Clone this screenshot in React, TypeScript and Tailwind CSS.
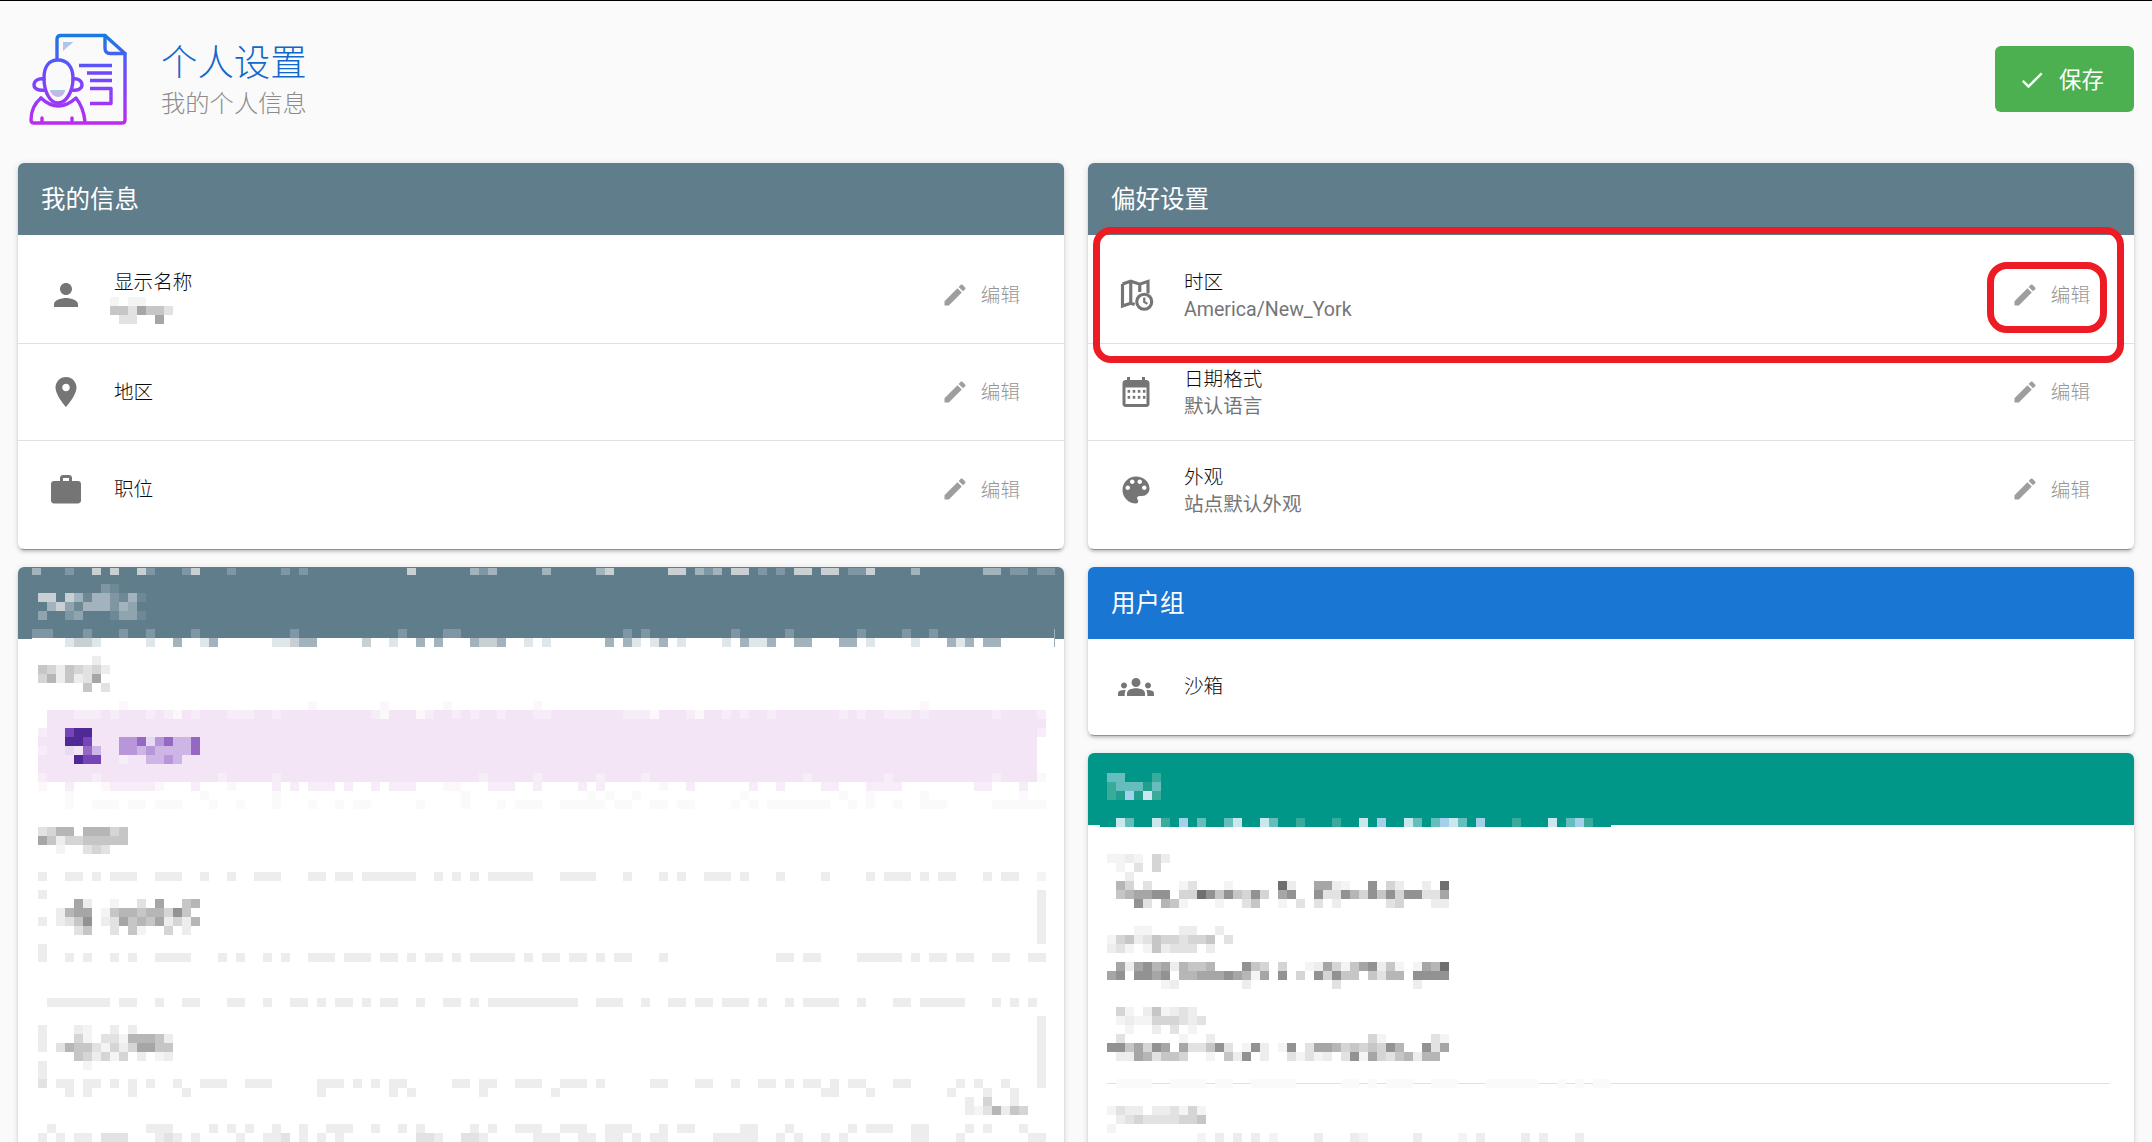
import React from 'react';

const COLORS: Record<string, string> = {
  '0': '#fafafa', '1': '#f4f4f4', '2': '#ededed', '3': '#e2e2e2', '4': '#d5d5d5',
  '5': '#c6c6c6', '6': '#b6b6b6', '7': '#a6a6a6', '8': '#929292', '9': '#6f6f6f',
  a: '#7f97a4', b: '#a3b3bd', c: '#c8d0d4', d: '#dfe7ea', g: '#6e8896', h: '#90a4af',
  p: '#f3e5f5', q: '#f7edf8', r: '#fbf7fb',
  v: '#4f2a96', w: '#7446b8', x: '#b796da', y: '#cdb6e6', z: '#9568c4', n: '#e8daf2',
  t: '#38ab9b', u: '#66bdbd', k: '#c8e8ee', l: '#a4d0ea', m: '#1fa08e',
};

type Row = [number, string, number?];

const LEFT_ROWS: Row[] = [
  [568, '0.33:b 4:a 7:c 9:c 12:ca 17:ac 22:a 28:a 30:a 42:c 49:bab 57:b 63:bc 71:cc 74:bab 78:cc 81:a 83:a 85:cc 88:cc 91:aac 98:b 106:bb 109:aa 112:aa', 7],
  [584, '8:ag'],
  [593, '1:cc 4:cbgbbagbg'],
  [602, '2:bchgbbbabh'],
  [611, '1:h 4:ah 9:ghhg'],
  [629, '0.33:aa 1.67:a 6:a 10:a 13:a 18:a 29:a 41:a 46:aa 66:a 68:a 78:a 84:a 92:a 97:a 100:a'],
  [638, '4:dccd 13:d 16:b 19:db 27:ddcbb 37:c 40:d 43:b 45:b 49:bccb 55:d 57:d 64:b 66:bd 69:db 72:d 77:d 79:bddb 85:bb 90:bb 93:d 98:d 102:bdb 106:bb'],
  [656, '7:2'],
  [665, '1:54254342'],
  [674, '1:4625237'],
  [683, '6:5 8:3'],
  [701, '10:r 31:r 39:r 46:r 56:r 99:r'],
  [710, '5:qqq 9:q 13:q 15:qr 18:q 22:qqq 27:q 38:qr 43:rq 47:q 49:q 52:q 56:qq 66:qqqr 73:qr 77:q 79:q 82:q 90:q 92:q 95:qqq 99:q 107:q 112:q'],
  [719, '112:p'],
  [728, '1:q 4:wvv 112:q'],
  [737, '1:p 4:vvw 10:xxznxzyyz'],
  [746, '1:q 4:n 6:zy 10:xxyxyyyyz'],
  [755, '1:p 5:vww 10:q 13:yyxy'],
  [764, '1:p'],
  [773, '1:q 7:q 21:q 27:q 50:q 56:q 63:q 68:q 86:q 95:q 107:q 112:r'],
  [782, '1:r 4:q 8:r 9:qqq 12:qq 14:r 18:q 22:r 27:q 29:q 31:qqq 35:q 38:q 40:qqq 46:rr 51:qqq 56:q 61:q 63:q 70:r 73:q 80:q 83:q 88:qq 93:qqqq 105:qq 110:q'],
  [791, '4:0 19:0 27:0 48:0 62:0 64:0 67:0 79:0 90:0 93:0 99:0 110:0'],
  [800, '4:0 7:000 11:00 14:000 20:0 23:0 27:0 31:0 34:0 36:00 43:0 48:0 52:0 54:000 59:00000 65:00 69:00 72:00 78:0 80:0 82:0000000 91:0 93:0 96:0 99:000 107:000000'],
  [827, '1:3466 6:66645'],
  [836, '1:7524455555'],
  [845, '3:1 6:343'],
  [872, '1:2 4:22 7:2 9:222 14:222 19:2 22:2 25:222 31:22 34:22 37:222222 45:2 47:2 49:2 51:22222 59:2222 66:2 70:2 72:2 75:222 79:2 83:2 88:2 93:2 95:222 99:2 101:22 106:2 108:22 112:1'],
  [890, '1:2 112:2'],
  [899, '5:72 9:1 12:3 14:7 17:56 112:2'],
  [908, '3:2677 8:1566566485 112:2'],
  [917, '1:2 3:2358 8:23756572426 112:2'],
  [926, '5:35 9:3 11:51 15:4 17:2 112:2'],
  [935, '112:2'],
  [944, '1:2'],
  [953, '1:2 4:2 6:2 9:2 11:2 14:2222 21:2 23:2 26:2 28:2 31:222 35:222 39:22 42:2 44:22 47:2 49:22222 55:2 57:22 60:22 63:2 65:22 70:2 83:22 86:22 92:22222 98:2 100:22 103:22 107:22 111:22'],
  [998, '2:2222222 10:22 14:2 17:22 22:22 26:2 29:22 32:2 34:22 37:2 39:22 43:2 46:22 49:2 51:2222222222 63:222 68:2 71:22 74:22 77:222 81:2 84:2 86:2222 92:2 96:22 99:22222 107:2 109:2 111:2'],
  [1016, '112:2'],
  [1025, '1:2 5:21 9:2 11:2 112:2'],
  [1034, '1:2 5:41 8:33 10:1 11:66652 112:2'],
  [1043, '1:2 3:36553 8:14247755 112:2'],
  [1052, '5:542414 12:2 14:12 112:2'],
  [1061, '1:2 6:1 112:2'],
  [1070, '1:2 112:2'],
  [1079, '1:3 3:22 6:22 9:2 11:2 13:2 16:2 19:222 24:222 32:222 36:2 38:2 40:22 47:22 50:22 54:22 56:2 59:222 63:2 69:22 74:22 78:2 81:22 84:2 86:22 89:2 91:22 96:22 103:2 105:2 108:2 112:2'],
  [1088, '4:2 6:2 11:2 17:2 32:2 40:2 42:2 50:2 58:2 88:22 93:2 102:2 106:2 109:2'],
  [1097, '104:2 106:4 109:2'],
  [1106, '104:2136254'],
  [1124, '2:2 13:222 20:2 22:2 24:2 27:2 30:2 33:222 38:2 41:2 43:2 49:2 51:2 54:222 59:222 64:222 70:2 72:22 79:22 84:2 91:2 93:222 98:22 104:2 106:2 110:2'],
  [1133, '1:2 3:2 5:22 8:333 14:232 18:2 23:2 26:223 30:2 32:2 34:2 43:33 45:2 48:33 50:2 56:222 61:22 64:22 67:2 69:22 76:22222 83:2 85:2 88:2 90:2 98:22 103:2 111:22'],
];

const TEAL_ROWS: Row[] = [
  [773, '1:uu 6:t'],
  [782, '1:tuuumu'],
  [791, '1:tmlmkt'],
  [818, '2:ku 6:kt 9:l 11:u 14:uk 18:ku 22:t 26:t 29:k 31:l 34:ku 37:ulku 42:l 46:t 50:k 52:ult'],
  [854, '1:1121 6:42'],
  [863, '2:1 4:3 6:4'],
  [872, '3:2'],
  [881, '2:64 5:3 9:13 14:1 20:92 24:7721 30:8 32:42 36:2 38:9'],
  [890, '2:5677 6:88 9:44985 14:85484 20:78 24:833864 30:85848 35:8 36:337'],
  [899, '4:83 7:65 9:1 13:1 16:35 20:1 22:3 24:3 26:2 32:34 37:22'],
  [926, '4:11 9:22 13:2'],
  [935, '1:14523 6:54434 11:45 14:3'],
  [944, '1:231 5:1525 8:333 12:2'],
  [962, '2:7278 6:672 9:6556 16:854 20:4 23:127 26:41 28:578 31:251 35:176 38:9'],
  [971, '1:78 4:887 7:8 9:667778 15:761 18:7 20:8 22:4 24:84 26:8 27:55 30:53 32:66 35:8888'],
  [980, '7:12 16:2 26:3 35:2'],
  [1007, '2:41 5:25 7:1232'],
  [1016, '2:1211 6:444 9:323'],
  [1025, '3:1 6:2 8:3 10:1'],
  [1034, '2:3 9:1 12:2 30:41 37:31'],
  [1043, '1:885748 7:7 9:7335 13:83 16:182 20:18 23:37764 28:54548 33:6 36:837'],
  [1052, '2:227 5:635 8:54 12:1 14:52 16:8 18:2 21:31 23:312 27:381 30:74356 35:2 36:66'],
  [1079, '2:0000 8:0000 13:00 17:00000 27:00 30:0 32:000 37:000 43:000000 51:0 53:0 55:00'],
  [1106, '1:132 4:2 6:2 7:231 10:41'],
  [1115, '2:2343 6:333 9:445'],
  [1124, '1:1'],
  [1133, '11:1 13:2 15:2 17:2 19:1 24:2 28:21 35:2 40:1 42:2 47:2 49:2 53:2'],
];

// the blurred parts of the shot, one rect per mosaic cell, in page coordinates
const Mosaic = ({ rows, x, y, originX, children }: { rows: Row[]; x: number; y: number; originX: number; children?: React.ReactNode }) => (
  <svg className="absolute left-0 top-0" width={1046} height={1142 - y} viewBox={`${x} ${y} 1046 ${1142 - y}`} shapeRendering="crispEdges">
    {children}
    {rows.map(([rowY, spec, h]) =>
      spec.split(' ').map((seg) => {
        const [col, chars] = seg.split(':');
        return chars.split('').map((ch, i) => (
          <rect key={`${rowY}-${col}-${i}`} x={originX + (parseFloat(col) + i) * 9} y={rowY} width={9} height={h ?? 9} fill={COLORS[ch]} />
        ));
      })
    )}
  </svg>
);

const Icon = ({ d, size = 36, className = 'fill-[#757575]' }: { d: string; size?: number; className?: string }) => (
  <svg viewBox="0 0 24 24" width={size} height={size} className={className}>
    <path d={d} />
  </svg>
);

const PERSON = 'M12 12c2.21 0 4-1.79 4-4s-1.79-4-4-4-4 1.79-4 4 1.79 4 4 4zm0 2c-2.67 0-8 1.34-8 4v2h16v-2c0-2.66-5.33-4-8-4z';
const ROOM = 'M12 2C8.13 2 5 5.13 5 9c0 5.25 7 13 7 13s7-7.75 7-13c0-3.87-3.13-7-7-7zm0 9.5c-1.38 0-2.5-1.12-2.5-2.5s1.12-2.5 2.5-2.5 2.5 1.12 2.5 2.5-1.12 2.5-2.5 2.5z';
const WORK = 'M20 6h-4V4c0-1.11-.89-2-2-2h-4c-1.11 0-2 .89-2 2v2H4c-1.11 0-1.99.89-1.99 2L2 19c0 1.11.89 2 2 2h16c1.11 0 2-.89 2-2V8c0-1.11-.89-2-2-2zm-6 0h-4V4h4v2z';
const EDIT = 'M3 17.25V21h3.75L17.81 9.94l-3.75-3.75L3 17.25zM20.71 7.04c.39-.39.39-1.02 0-1.41l-2.34-2.34c-.39-.39-1.02-.39-1.41 0l-1.83 1.83 3.75 3.75 1.83-1.83z';
const PALETTE = 'M12 3c-4.97 0-9 4.03-9 9s4.03 9 9 9c.83 0 1.5-.67 1.5-1.5 0-.39-.15-.74-.39-1.01-.23-.26-.38-.61-.38-.99 0-.83.67-1.5 1.5-1.5H16c2.76 0 5-2.24 5-5 0-4.42-4.03-8-9-8zm-5.5 9c-.83 0-1.5-.67-1.5-1.5S5.67 9 6.5 9 8 9.67 8 10.5 7.33 12 6.5 12zm3-4C8.67 8 8 7.33 8 6.5S8.67 5 9.5 5s1.5.67 1.5 1.5S10.33 8 9.5 8zm5 0c-.83 0-1.5-.67-1.5-1.5S13.67 5 14.5 5s1.5.67 1.5 1.5S15.33 8 14.5 8zm3 4c-.83 0-1.5-.67-1.5-1.5S16.67 9 17.5 9s1.5.67 1.5 1.5-.67 1.5-1.5 1.5z';
const GROUPS = 'M12 12.75c1.63 0 3.07.39 4.24.9 1.08.48 1.76 1.56 1.76 2.73V18H6v-1.61c0-1.18.68-2.26 1.76-2.73 1.17-.52 2.61-.91 4.24-.91zM4 13c1.1 0 2-.9 2-2s-.9-2-2-2-2 .9-2 2 .9 2 2 2zm1.13 1.1c-.37-.06-.74-.1-1.13-.1-.99 0-1.93.21-2.78.58C.48 14.9 0 15.62 0 16.43V18h4.5v-1.61c0-.83.23-1.61.63-2.29zM20 13c1.1 0 2-.9 2-2s-.9-2-2-2-2 .9-2 2 .9 2 2 2zm4 3.43c0-.81-.48-1.53-1.22-1.85-.85-.37-1.79-.58-2.78-.58-.39 0-.76.04-1.13.1.4.68.63 1.46.63 2.29V18H24v-1.57zM12 6c1.66 0 3 1.34 3 3s-1.34 3-3 3-3-1.34-3-3 1.34-3 3-3z';
const CHECK = 'M9 16.17L4.83 12l-1.42 1.41L9 19 21 7l-1.41-1.41z';

const MapClock = () => (
  <svg viewBox="0 0 24 24" width={36} height={36} className="fill-none stroke-[#757575]" strokeWidth={2.1}>
    <path d="M3 4.600 8.500 2.800l6 2 5.500-1.900V11M3 4.600v14.800l5.500-1.900 2.600.9M8.500 2.800v14.700M14.500 4.800V10" />
    <circle cx={17.5} cy={16.5} r={5} />
    <path d="M17.500 13.600v3l2.100 1.300" strokeWidth={1.5} />
  </svg>
);

const Calendar = () => (
  <svg viewBox="0 0 24 24" width={36} height={36} className="fill-[#757575]">
    <path d="M19 4h-1V2h-2v2H8V2H6v2H5C3.900 4 3 4.900 3 6v14c0 1.100.9 2 2 2h14c1.100 0 2-.9 2-2V6c0-1.100-.9-2-2-2zm0 16H5V9h14v11z" />
    {[10.6, 14.6].map((y) =>
      [6.4, 9.8, 13.2, 16.6].map((x) => <rect key={`${x}-${y}`} x={x} y={y} width={1.7} height={1.9} />)
    )}
  </svg>
);

const Logo = () => (
  <svg viewBox="0 0 120 100" width={120} height={100} className="shrink-0 fill-none">
    <defs>
      <linearGradient id="logoGrad" gradientUnits="userSpaceOnUse" x1="0" y1="5" x2="0" y2="93">
        <stop offset="0" stopColor="#1a7ae0" />
        <stop offset="0.45" stopColor="#7048ff" />
        <stop offset="1" stopColor="#bb2cf0" />
      </linearGradient>
    </defs>
    <g stroke="url(#logoGrad)" strokeWidth={3.4} strokeLinejoin="round" strokeLinecap="round">
      <path d="M37 28V9Q37 5.500 41 5.500H85L105 23.500V90Q105 93 102 93H14Q11 93 11 90C11 80 15 73 21 68" />
      <path d="M85 5.500V18Q85 23.500 90 23.500H105" />
      <path d="M38 30C28 30 24 38 24 48C24 62 30 73 38 73C46 73 53 62 53 48C53 38 48 30 38 30Z" />
      <path d="M24 49C18 48 14 51 14 55C14 59 19 61 25 60M53 49C58 48 62 51 62 55C62 59 57 61 52 60" />
      <path d="M21 68Q38 84 56 68C60 73 64 81 65 92" />
      <path d="M22 88V92M52 88V92" />
      <path d="M59 35.500H92M67 43H92M70 50.500H92M70 58.500H91V73.500H70" strokeLinecap="butt" />
    </g>
    <path d="M30 60H45Q44 67 38 67Q32 67 30 60Z" fill="#c8b4e4" />
    <path d="M30 60H45L44.500 62H30.500Z" fill="#a4c8ea" />
    <path d="M43 12H53L43 21Z" fill="#c6bce6" />
    <path d="M43 12H53L50 15H43Z" fill="#a4c8ea" />
  </svg>
);

const CardHeader = ({ title, className = 'bg-[#607d8b]' }: { title?: string; className?: string }) => (
  <div className={`h-[72px] flex items-center pl-[23px] pt-[2px] text-white text-[24.5px] ${className}`}>{title}</div>
);

const SettingRow = ({ icon, title, sub, blurred, last }: { icon: React.ReactNode; title: string; sub?: string; blurred?: boolean; last?: boolean }) => (
  <div className={`h-[97px] flex items-center ${last ? '' : 'border-b border-[#e0e0e0]'}`}>
    <div className="w-[96px] shrink-0 flex justify-center">{icon}</div>
    <div className={`flex-1 leading-[28px] ${sub || blurred ? 'pt-[3px]' : 'pt-[1px]'}`}>
      <div className="text-[19.6px] text-[#0c0c0c] font-light">{title}</div>
      {sub && <div className="-mt-[1px] text-[19.6px] text-[#757575]">{sub}</div>}
      {blurred && (
        <svg width={80} height={28} className="-ml-[4px]" shapeRendering="crispEdges">
          <path fill="#f4f4f4" d="M0 0h9v9H0zM18 0h18v9H18z" />
          <path fill="#c6c6c6" d="M0 9h9v9H0zM9 9h9v9H9zM36 9h9v9h-9zM45 9h9v9h-9z" />
          <path fill="#a6a6a6" d="M27 9h9v9h-9zM45 18h9v9h-9z" />
          <path fill="#e2e2e2" d="M18 9h9v9h-9zM9 18h9v9H9zM18 18h9v9h-9zM54 9h9v9h-9z" />
        </svg>
      )}
    </div>
    <div className="flex items-center gap-[12px] pr-[44px]">
      <Icon d={EDIT} size={28} className="fill-[#9e9e9e]" />
      <span className="pt-[2px] text-[19.6px] text-[#969696] font-light">编辑</span>
    </div>
  </div>
);

const Card = ({ children }: { children: React.ReactNode }) => (
  <div className="relative rounded-md bg-white overflow-hidden shadow-[0_4px_1px_-3px_rgba(0,0,0,0.3),0_3px_3px_0_rgba(0,0,0,0.14),0_1px_7px_0_rgba(0,0,0,0.12)]">
    {children}
  </div>
);

const App: React.FC = () => {
  return (
    <div className="relative h-[1142px] overflow-hidden bg-[#fafafa] border-t border-black font-['Roboto','Noto_Sans_CJK_SC',sans-serif]">
      {/* Page title */}
      <div className="h-[162px] flex items-start pr-[18px]">
        <div className="ml-[20px] mt-[29px]">
          <Logo />
        </div>
        <div className="ml-[21px] mt-[39px] flex-1 font-light">
          <h1 className="text-[36.4px] leading-[47px] text-[#1268c8]">个人设置</h1>
          <p className="text-[24.3px] leading-[34px] text-[#8c8c8c]">我的个人信息</p>
        </div>
        <button className="mt-[45px] w-[139px] h-[66px] pl-[23px] rounded-md bg-[#4caf50] text-white text-[22.4px] flex items-center gap-[13px]">
          <span className="pt-[2px]">
            <Icon d={CHECK} size={28} className="fill-white" />
          </span>
          <span className="pt-[3px]">保存</span>
        </button>
      </div>

      <div className="grid grid-cols-2 gap-x-6 px-[18px]">
        {/* Left column */}
        <div className="flex flex-col gap-[18px]">
          <Card>
            <CardHeader title="我的信息" />
            <div className="pt-3 pb-[11px]">
              <SettingRow icon={<Icon d={PERSON} />} title="显示名称" blurred />
              <SettingRow icon={<Icon d={ROOM} />} title="地区" />
              <SettingRow icon={<Icon d={WORK} />} title="职位" last />
            </div>
          </Card>
          <Card>
            <CardHeader />
            <div className="h-[560px] pt-[71px]">
              <div className="ml-[29px] w-[990px] h-[72px] bg-[#f3e5f5]" />
            </div>
            <Mosaic rows={LEFT_ROWS} x={18} y={567} originX={29}>
              <rect x={32} y={638} width={1022} height={1} fill="#fff" />
              <rect x={1054} y={629} width={1} height={18} fill="#9fb0bc" />
            </Mosaic>
          </Card>
        </div>

        {/* Right column */}
        <div className="flex flex-col gap-[18px]">
          <Card>
            <CardHeader title="偏好设置" />
            <div className="pt-3 pb-[11px]">
              <SettingRow icon={<MapClock />} title="时区" sub="America/New_York" />
              <SettingRow icon={<Calendar />} title="日期格式" sub="默认语言" />
              <SettingRow icon={<Icon d={PALETTE} />} title="外观" sub="站点默认外观" last />
            </div>
          </Card>
          <Card>
            <CardHeader title="用户组" className="bg-[#1976d2]" />
            <div className="h-[96px] flex items-center">
              <div className="w-[96px] flex justify-center">
                <Icon d={GROUPS} />
              </div>
              <span className="text-[19.6px] font-light text-[#0c0c0c]">沙箱</span>
            </div>
          </Card>
          <Card>
            <CardHeader className="bg-[#009688]" />
            <div className="h-[400px] pt-[258px] pl-[19px] pr-[24px]">
              <div className="h-px bg-[#e0e0e0]" />
            </div>
            <Mosaic rows={TEAL_ROWS} x={1088} y={753} originX={1098}>
              <rect x={1100} y={825} width={511} height={2} fill="#009688" />
            </Mosaic>
          </Card>
        </div>
      </div>

      {/* Red annotation boxes */}
      <div className="absolute left-[1093px] top-[226px] w-[1031px] h-[136px] rounded-[18px] border-[7px] border-[#ed1c24]" />
      <div className="absolute left-[1987px] top-[261px] w-[120px] h-[71px] rounded-[20px] border-[7px] border-[#ed1c24]" />
    </div>
  );
};

export default App;
